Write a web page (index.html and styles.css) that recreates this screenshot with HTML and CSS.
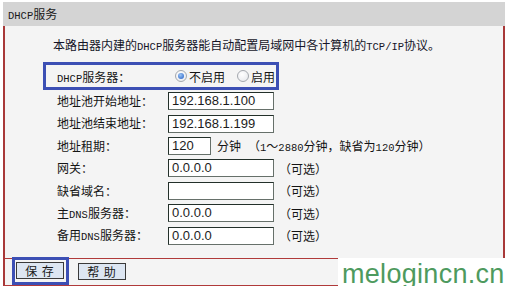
FILE: index.html
```html
<!DOCTYPE html>
<html lang="zh-CN">
<head>
<meta charset="utf-8">
<link rel="stylesheet" href="styles.css">
</head>
<body>
<div class="panel">
  <div class="head"><span class="en">DHCP</span>服务</div>
  <div class="main">
    <p class="desc">本路由器内建的<span class="en">DHCP</span>服务器能自动配置局域网中各计算机的<span class="en">TCP/IP</span>协议。</p>
    <div class="hl">
      <span class="hl-label"><span class="en">DHCP</span>服务器：</span>
      <span class="opt"><span class="radio on"></span>不启用</span>
      <span class="opt"><span class="radio"></span>启用</span>
    </div>
    <div class="grid">
      <div class="lbl">地址池开始地址：</div>
      <div class="cell"><span class="field">192.168.1.100</span></div>
      <div class="lbl">地址池结束地址：</div>
      <div class="cell"><span class="field">192.168.1.199</span></div>
      <div class="lbl">地址租期：</div>
      <div class="cell"><span class="field short">120</span><span class="unit">分钟</span><span class="note">（<span class="en">1</span>～<span class="en">2880</span>分钟，缺省为<span class="en">120</span>分钟）</span></div>
      <div class="lbl">网关：</div>
      <div class="cell"><span class="field">0.0.0.0</span><span class="opt-note">（可选）</span></div>
      <div class="lbl">缺省域名：</div>
      <div class="cell"><span class="field"></span><span class="opt-note">（可选）</span></div>
      <div class="lbl">主<span class="en">DNS</span>服务器：</div>
      <div class="cell"><span class="field">0.0.0.0</span><span class="opt-note">（可选）</span></div>
      <div class="lbl">备用<span class="en">DNS</span>服务器：</div>
      <div class="cell"><span class="field">0.0.0.0</span><span class="opt-note">（可选）</span></div>
    </div>
  </div>
  <div class="bar">
    <span class="btn-focus"><span class="btn">保 存</span></span>
    <span class="btn">帮 助</span>
  </div>
  <div class="wm">melogincn.cn</div>
</div>
</body>
</html>
```

FILE: styles.css
```css
html, body {
  margin: 0;
  padding: 0;
  background: #ffffff;
}
body {
  font-family: "Noto Sans CJK SC", "Liberation Sans", sans-serif;
  font-size: 12px;
  color: #141414;
}
.en {
  font-family: "Liberation Mono", monospace;
  font-size: 10.5px;
  vertical-align: baseline;
  line-height: 1;
}
.panel {
  position: relative;
  width: 502px;
  margin: 2px 0 0 3px;
}
.head {
  height: 24px;
  line-height: 24px;
  background: #d4d4d4;
  padding-left: 5px;
  color: #1a1a1a;
}
.main {
  background: #f4f4f4;
  border-left: 2px solid #a83838;
  border-right: 2px solid #a83838;
  border-bottom: 1px solid #b03a3a;
  padding: 11px 0 11px 0;
}
.desc {
  margin: 0 0 9px 48px;
  line-height: 16px;
  height: 16px;
  color: #141428;
  white-space: nowrap;
}
.hl {
  margin-left: 38px;
  width: 230px;
  height: 22px;
  border: 3px solid #3c4fb4;
  display: flex;
  align-items: center;
  white-space: nowrap;
}
.hl-label {
  box-sizing: border-box;
  flex: 0 0 129px;
  padding-left: 11px;
}
.opt {
  display: inline-flex;
  align-items: center;
  flex: 0 0 auto;
  margin-right: 12px;
}
.radio {
  box-sizing: border-box;
  width: 12px;
  height: 12px;
  border-radius: 50%;
  border: 1px solid #a4a8ae;
  background: radial-gradient(circle at 40% 35%, #ffffff, #e4e6ea);
  margin-right: 2px;
  display: inline-flex;
  align-items: center;
  justify-content: center;
}
.radio.on::after {
  content: "";
  width: 6px;
  height: 6px;
  border-radius: 50%;
  background: radial-gradient(circle at 40% 35%, #9cc4f4, #1f5cc4);
}
.grid {
  display: grid;
  grid-template-columns: 111px auto;
  grid-auto-rows: 22.4px;
  margin-left: 52px;
}
.lbl {
  line-height: 22.4px;
  white-space: nowrap;
}
.cell {
  display: flex;
  align-items: center;
  white-space: nowrap;
}
.field {
  box-sizing: border-box;
  width: 106px;
  height: 18px;
  border: 1px solid #23302a;
  border-right-color: #66706a;
  border-bottom-color: #66706a;
  background: #ffffff;
  font-family: "Liberation Sans", sans-serif;
  font-size: 13px;
  line-height: 16px;
  padding-left: 3px;
  color: #1c1c1c;
}
.field.short {
  width: 43px;
}
.unit {
  margin-left: 6px;
}
.note {
  margin-left: 7px;
}
.opt-note {
  margin-left: 5px;
}
.bar {
  height: 26px;
  background: #f4f4f4;
  border-left: 2px solid #a83838;
  border-right: 2px solid #a83838;
  border-bottom: 1px solid #b03a3a;
  display: flex;
  align-items: center;
  padding-left: 7px;
  gap: 9px;
}
.btn-focus {
  border: 3px solid #3c4fb4;
  padding: 2px 2px 3px 1px;
  display: inline-flex;
  margin-top: -1px;
}
.btn {
  box-sizing: border-box;
  width: 48px;
  height: 17px;
  border: 1px solid #3a3a3a;
  background: #dde6f2;
  display: inline-flex;
  align-items: center;
  justify-content: center;
  letter-spacing: 1px;
  color: #1a1a1a;
}
.wm {
  position: absolute;
  left: 335px;
  top: 256px;
  width: 170px;
  height: 32px;
  background: #ffffff;
  color: #4e9a5e;
  font-family: "Liberation Sans", sans-serif;
  font-size: 27px;
  line-height: 32px;
  letter-spacing: 0.3px;
  padding-left: 4px;
  box-sizing: border-box;
  white-space: nowrap;
}
```
